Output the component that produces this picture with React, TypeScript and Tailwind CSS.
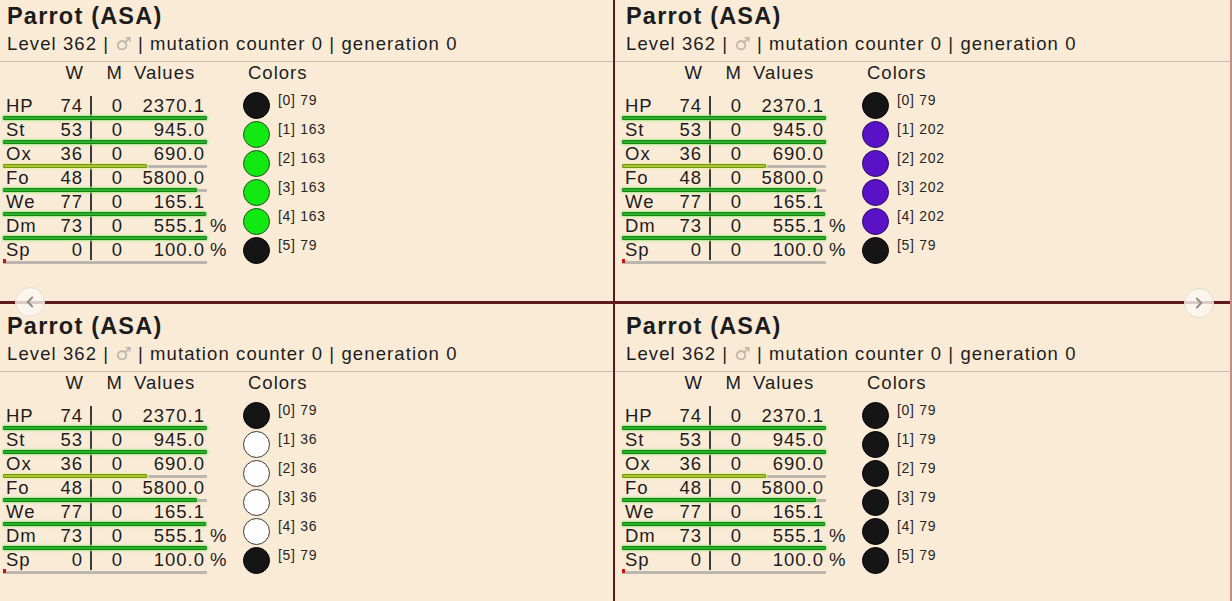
import React from "react";
import { ChevronLeft, ChevronRight } from "lucide-react";

type Stat = {
  l: string;
  w: number;
  v: string;
  pct?: boolean;
  bar: number;
  kind: "green" | "yellow" | "none";
};

const stats: Stat[] = [
  { l: "HP", w: 74, v: "2370.1", bar: 204, kind: "green" },
  { l: "St", w: 53, v: "945.0", bar: 204, kind: "green" },
  { l: "Ox", w: 36, v: "690.0", bar: 144, kind: "yellow" },
  { l: "Fo", w: 48, v: "5800.0", bar: 194, kind: "green" },
  { l: "We", w: 77, v: "165.1", bar: 203, kind: "green" },
  { l: "Dm", w: 73, v: "555.1", pct: true, bar: 204, kind: "green" },
  { l: "Sp", w: 0, v: "100.0", pct: true, bar: 0, kind: "none" },
];

type Swatch = { fill: string; border: string };
const BLACK: Swatch = { fill: "#151515", border: "#000000" };
const GREEN: Swatch = { fill: "#12e812", border: "#1d4f1d" };
const PURPLE: Swatch = { fill: "#5a12c6", border: "#2a0a5c" };
const WHITE: Swatch = { fill: "#fdfdfd", border: "#3a3a3a" };

type Panel = { colors: { s: Swatch; n: number }[]; right?: boolean };

const panels: Panel[] = [
  {
    colors: [
      { s: BLACK, n: 79 },
      { s: GREEN, n: 163 },
      { s: GREEN, n: 163 },
      { s: GREEN, n: 163 },
      { s: GREEN, n: 163 },
      { s: BLACK, n: 79 },
    ],
  },
  {
    right: true,
    colors: [
      { s: BLACK, n: 79 },
      { s: PURPLE, n: 202 },
      { s: PURPLE, n: 202 },
      { s: PURPLE, n: 202 },
      { s: PURPLE, n: 202 },
      { s: BLACK, n: 79 },
    ],
  },
  {
    colors: [
      { s: BLACK, n: 79 },
      { s: WHITE, n: 36 },
      { s: WHITE, n: 36 },
      { s: WHITE, n: 36 },
      { s: WHITE, n: 36 },
      { s: BLACK, n: 79 },
    ],
  },
  {
    right: true,
    colors: [
      { s: BLACK, n: 79 },
      { s: BLACK, n: 79 },
      { s: BLACK, n: 79 },
      { s: BLACK, n: 79 },
      { s: BLACK, n: 79 },
      { s: BLACK, n: 79 },
    ],
  },
];

function Bar({ stat }: { stat: Stat }) {
  return (
    <div className="relative h-[4px] w-[204px]">
      <div className="absolute left-0 top-[1px] h-[3px] w-[204px] bg-[#bab6ae]" />
      {stat.kind === "green" && (
        <div
          className="absolute left-0 top-0 h-[4px] rounded-[1px] border border-[#1c7f1c] bg-[#26b426] shadow-[0_0_2px_1px_#a3e98a]"
          style={{ width: stat.bar }}
        />
      )}
      {stat.kind === "yellow" && (
        <div
          className="absolute left-0 top-0 h-[4px] rounded-[1px] border border-[#76921a] bg-[#aac82e] shadow-[0_0_2px_1px_#e4f0a0]"
          style={{ width: stat.bar }}
        />
      )}
      {stat.kind === "none" && (
        <div className="absolute left-0 top-[-1px] h-[4px] w-[3px] bg-[#d01010]" />
      )}
    </div>
  );
}

function CreaturePanel({ panel }: { panel: Panel }) {
  return (
    <div
      className={
        "h-[307px] overflow-hidden bg-[#faebd7] text-[#1c1c1c] " +
        (panel.right ? "pl-[7px]" : "pl-[3px]")
      }
    >
      <div className="pl-[4px] pt-[9px] text-[23.5px] font-bold leading-[26px] tracking-[1.2px]">
        Parrot (ASA)
      </div>
      <div className="mt-[4px] flex items-baseline whitespace-pre pl-[4px] text-[18.5px] leading-[22px] tracking-[1.1px]">
        <span>Level 362 | </span>
        <span className="font-['DejaVu_Sans'] text-[18px] tracking-normal text-[#bdb4aa]">♂</span>
        <span> | mutation counter 0 | generation 0</span>
      </div>
      <div className={"mt-[6px] border-t border-[#cbbfae] " + (panel.right ? "-ml-[7px]" : "-ml-[3px]")} />
      <div className="flex text-[18.5px] tracking-[1px]">
        <div className="w-[240px]">
          <div className="flex h-[22px] leading-[22px]">
            <div className="w-[47px]" />
            <div className="w-[40px] pr-[6px] text-right">W</div>
            <div className="w-[2px]" />
            <div className="w-[32px] pr-[1px] text-right">M</div>
            <div className="pl-[10px]">Values</div>
          </div>
          <div className="mt-[12px] flex flex-col">
            {stats.map((s) => (
              <div key={s.l} className="flex flex-col">
                <div className="flex h-[20px] items-center leading-[20px]">
                  <div className="w-[47px] pl-[3px]">{s.l}</div>
                  <div className="w-[40px] pr-[7px] text-right">{s.w}</div>
                  <div className="h-[20px] w-[2px] bg-[#3a3a3a]" />
                  <div className="w-[32px] pr-[1px] text-right">0</div>
                  <div className="w-[81px] text-right">{s.v}</div>
                  <div className="pl-[5px]">{s.pct ? "%" : ""}</div>
                </div>
                <Bar stat={s} />
              </div>
            ))}
          </div>
        </div>
        <div className="flex flex-col">
          <div className="h-[22px] pl-[5px] leading-[22px]">Colors</div>
          <div className="mt-[8px] flex flex-col gap-[2px]">
            {panel.colors.map((c, i) => (
              <div key={i} className="flex items-start">
                <div
                  className="h-[27px] w-[27px] rounded-full border-[1.5px]"
                  style={{ backgroundColor: c.s.fill, borderColor: c.s.border }}
                />
                <div className="ml-[8px] text-[14px] leading-[16px] tracking-[0.7px] text-[#262626]">
                  [{i}] {c.n}
                </div>
              </div>
            ))}
          </div>
        </div>
      </div>
    </div>
  );
}

export default function App() {
  return (
    <div
      className="relative h-[601px] w-[1232px] overflow-hidden bg-[#faebd7]"
      style={{ fontFamily: '"Liberation Sans", Arial, "DejaVu Sans", sans-serif' }}
    >
      <div className="-mt-[6px] grid w-[1232px] grid-cols-[613px_615px] grid-rows-[307px_307px] gap-x-[2px] gap-y-[3px] border-r-2 border-[#c98a8a] bg-[#5e1a1a]">
        {panels.map((p, i) => (
          <CreaturePanel key={i} panel={p} />
        ))}
      </div>
      <div className="absolute left-[15px] top-[287px] flex h-[30px] w-[30px] items-center justify-center rounded-full border border-[#e6dccf] bg-[#fdf8f2]/80 text-[#8f8a85]">
        <ChevronLeft size={18} strokeWidth={2.5} />
      </div>
      <div className="absolute left-[1184px] top-[288px] flex h-[30px] w-[30px] items-center justify-center rounded-full border border-[#e6dccf] bg-[#fdf8f2]/80 text-[#8f8a85]">
        <ChevronRight size={18} strokeWidth={2.5} />
      </div>
    </div>
  );
}
